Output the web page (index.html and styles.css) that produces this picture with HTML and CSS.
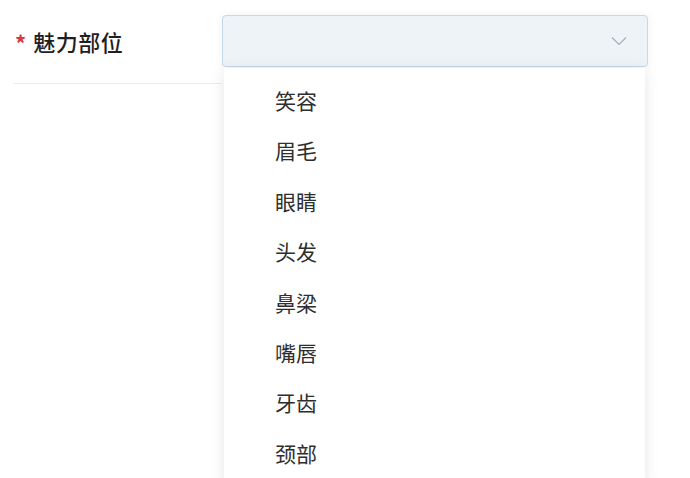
FILE: index.html
```html
<!DOCTYPE html>
<html lang="zh">
<head>
<meta charset="utf-8">
<link rel="stylesheet" href="styles.css">
</head>
<body>
<div class="form-item">
  <div class="label"><span class="req">*</span><span class="label-text">魅力部位</span></div>
  <div class="control">
    <div class="select">
      <svg class="chevron" width="16" height="10" viewBox="0 0 16 10"><path d="M1 1.5 L8 8.5 L15 1.5" fill="none" stroke="#a9adb3" stroke-width="1.2"/></svg>
    </div>
    <ul class="dropdown">
      <li>笑容</li>
      <li>眉毛</li>
      <li>眼睛</li>
      <li>头发</li>
      <li>鼻梁</li>
      <li>嘴唇</li>
      <li>牙齿</li>
      <li>颈部</li>
    </ul>
  </div>
</div>
</body>
</html>
```
FILE: styles.css
```css
html, body {
  margin: 0;
  padding: 0;
  background: #ffffff;
  font-family: "Noto Sans CJK SC", "Noto Sans", sans-serif;
  width: 690px;
  height: 478px;
  overflow: hidden;
}
.form-item {
  display: flex;
  align-items: flex-start;
}
.label {
  margin-left: 14px;
  width: 208px;
  height: 84px;
  box-sizing: border-box;
  padding-top: 15px;
  border-bottom: 1px solid #ececec;
  display: flex;
  align-items: flex-start;
}
.req {
  color: #d9363e;
  font-size: 22px;
  font-weight: 700;
  line-height: 52px;
  margin-left: 1px;
  margin-right: 7px;
  position: relative;
  top: 1px;
}
.label-text {
  font-size: 22px;
  line-height: 52px;
  font-weight: 500;
  color: #1f1f1f;
  letter-spacing: 0.5px;
}
.control {
  position: relative;
  margin-top: 15px;
  width: 426px;
}
.select {
  height: 52px;
  box-sizing: border-box;
  border: 1.5px solid #c4d9ec;
  border-radius: 4px;
  background: #eef3f8;
  box-shadow: 0 0 10px rgba(0, 0, 0, 0.06);
  display: flex;
  align-items: center;
  justify-content: flex-end;
  padding-right: 20px;
}
.chevron {
  display: block;
}
.dropdown {
  position: absolute;
  left: 2px;
  top: 53px;
  width: 421px;
  height: 420px;
  margin: 0;
  padding: 7px 0 0 0;
  list-style: none;
  background: #ffffff;
  box-shadow: 0 2px 14px rgba(0, 0, 0, 0.1);
  box-sizing: border-box;
}
.dropdown li {
  height: 50.4px;
  line-height: 50.4px;
  padding-left: 51px;
  font-size: 21px;
  color: #2e2e2e;
}
```
